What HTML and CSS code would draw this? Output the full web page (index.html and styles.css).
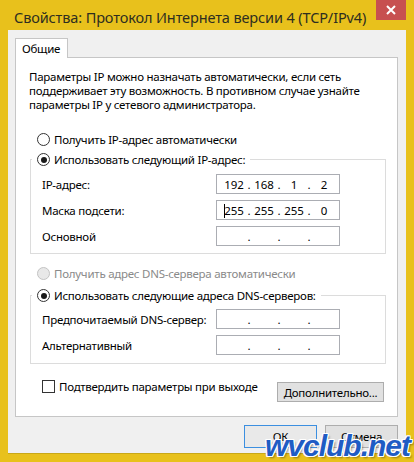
FILE: index.html
```html
<!DOCTYPE html>
<html lang="ru">
<head>
    <meta charset="UTF-8">
    <title>Свойства: Протокол Интернета версии 4 (TCP/IPv4)</title>
    <link rel="stylesheet" href="styles.css">
</head>
<body>

    <div class="window">
        <div class="titlebar">
            <span class="title">Свойства: Протокол Интернета версии 4 (TCP/IPv4)</span>
            <button class="close" type="button">
                <svg width="10" height="10" viewBox="0 0 10 10"><path d="M1 1 L9 9 M9 1 L1 9" stroke="#fff" stroke-width="2"/></svg>
            </button>
        </div>

        <div class="client">
            <div class="tabs"><div class="tab">Общие</div></div>

            <div class="panel">
                <p class="intro">Параметры IP можно назначать автоматически, если сеть<br>поддерживает эту возможность. В противном случае узнайте<br>параметры IP у сетевого администратора.</p>

                <label class="radio first"><span class="dot"></span>Получить IP-адрес автоматически</label>

                <fieldset class="group">
                    <legend><label class="radio"><span class="dot on"></span>Использовать следующий IP-адрес:</label></legend>
                    <div class="rows">
                        <span>IP-адрес:</span>
                        <div class="ip"><span class="oct">192</span><span class="sep">.</span><span class="oct">168</span><span class="sep">.</span><span class="oct">1</span><span class="sep">.</span><span class="oct">2</span></div>
                        <span>Маска подсети:</span>
                        <div class="ip"><span class="oct"><i class="caret"></i>255</span><span class="sep">.</span><span class="oct">255</span><span class="sep">.</span><span class="oct">255</span><span class="sep">.</span><span class="oct">0</span></div>
                        <span>Основной</span>
                        <div class="ip"><span class="oct"></span><span class="sep">.</span><span class="oct"></span><span class="sep">.</span><span class="oct"></span><span class="sep">.</span><span class="oct"></span></div>
                    </div>
                </fieldset>

                <label class="radio off dns-auto"><span class="dot"></span>Получить адрес DNS-сервера автоматически</label>

                <fieldset class="group dns">
                    <legend><label class="radio"><span class="dot on"></span>Использовать следующие адреса DNS-серверов:</label></legend>
                    <div class="rows">
                        <span>Предпочитаемый DNS-сервер:</span>
                        <div class="ip"><span class="oct"></span><span class="sep">.</span><span class="oct"></span><span class="sep">.</span><span class="oct"></span><span class="sep">.</span><span class="oct"></span></div>
                        <span>Альтернативный</span>
                        <div class="ip"><span class="oct"></span><span class="sep">.</span><span class="oct"></span><span class="sep">.</span><span class="oct"></span><span class="sep">.</span><span class="oct"></span></div>
                    </div>
                </fieldset>

                <div class="confirm">
                    <label class="check"><span class="box"></span>Подтвердить параметры при выходе</label>
                    <button class="btn advanced" type="button">Дополнительно...</button>
                </div>
            </div>

            <div class="buttons">
                <button class="btn default" type="button">ОК</button>
                <button class="btn" type="button">Отмена</button>
            </div>
        </div>

        <div class="watermark">wvclub.net</div>
    </div>

</body>
</html>
```

FILE: styles.css
```css
:root { --frame: #e8c11c; --face: #f0f0f0; --line: #c6c6c6; --font: "Noto Sans", "Open Sans", sans-serif; }
* { box-sizing: border-box; }
body { margin: 0; background: var(--frame); font-family: var(--font); font-size: 11.5px; letter-spacing: -0.25px; color: #000; }

.window { position: relative; width: 414px; height: 462px; background: var(--frame); overflow: hidden; }

/* заголовок окна */
.titlebar { height: 30px; display: flex; align-items: flex-start; }
.title { padding: 7px 0 0 14px; font-size: 14.5px; letter-spacing: -0.12px; line-height: 20px; color: #2e2e20; white-space: nowrap; }
.close { margin-left: auto; margin-right: 8px; width: 30px; height: 20px; border: none; background: #c75050; display: flex; align-items: center; justify-content: center; padding: 0; }

/* клиентская часть */
.client { margin: 0 8px; height: 424px; background: var(--face); padding: 8px 8px 0 7px; border-bottom: 1px solid #c9a818; }

.tabs { display: flex; height: 20px; position: relative; z-index: 1; margin-bottom: -1px; }
.tab { width: 53px; height: 20px; background: #fff; border: 1px solid var(--line); border-bottom: none; padding-left: 6px; line-height: 19px; }

.panel { height: 360px; background: #fff; border: 1px solid var(--line); padding: 12px 10px 0 13px; }
.intro { margin: 0; line-height: 14px; white-space: nowrap; }

.radio { display: flex; align-items: center; gap: 4px; height: 15px; line-height: 15px; white-space: nowrap; }
.radio.first { margin: 20px 0 0 8px; }
.dot { width: 13px; height: 13px; border: 1px solid #333; border-radius: 50%; background: #fff; display: flex; align-items: center; justify-content: center; }
.dot.on::after { content: ""; width: 6px; height: 6px; border-radius: 50%; background: #1a1a1a; }
.radio.off { color: #8a8a8a; }
.radio.off .dot { border-color: #c3c3c3; background: #e8e8e8; }
.dns-auto { margin: 12px 0 0 8px; }

.group { margin: 5px 0 0 1px; width: 356px; border: 1px solid #dcdcdc; padding: 0; }
.group legend { margin-left: 1px; padding: 0 5px; }
.group .rows { display: grid; grid-template-columns: 174px 124px; row-gap: 6px; align-items: center; padding: 7px 0 7px 11px; white-space: nowrap; }
.group.dns { margin-top: 7px; }
.group.dns .rows { padding: 6px 0 8px 11px; }

.ip { height: 20px; border: 1px solid #abadb3; background: #fff; display: flex; align-items: center; padding-left: 5px; letter-spacing: 0; }
.oct { width: 24px; text-align: center; }
.sep { width: 6px; text-align: center; }
.caret { display: inline-block; width: 1px; height: 14px; background: #000; vertical-align: -3px; margin-right: -1px; }

.confirm { display: flex; align-items: flex-start; justify-content: space-between; margin: 16px 3px 0 13px; }
.check { display: flex; align-items: center; gap: 4px; height: 13px; line-height: 13px; white-space: nowrap; }
.box { width: 13px; height: 13px; border: 1px solid #333; background: #fff; }

.btn { font-family: var(--font); font-size: 11.5px; letter-spacing: -0.25px; color: #000; background: #e1e1e1; border: 1px solid #adadad; padding: 0; }
.advanced { width: 107px; height: 20px; margin-top: 2px; }

.buttons { display: flex; justify-content: flex-end; gap: 8px; margin-top: 8px; }
.buttons .btn { width: 73px; height: 23px; }
.btn.default { border-color: #3c8fe0; background: #e9e9e9; }

/* подпись сайта поверх нижнего края */
.watermark { position: absolute; right: 4px; bottom: 1px; font-family: "Liberation Sans", Arial, sans-serif; font-weight: bold; font-style: italic; font-size: 30px; line-height: 30px; color: #1f5cc4; letter-spacing: -1px;
    text-shadow: 1px 0 #fff, -1px 0 #fff, 0 1px #fff, 0 -1px #fff, 1px 1px #fff, -1px -1px #fff, 1px -1px #fff, -1px 1px #fff, 2px 2px 2px rgba(0,0,0,0.35); }
```
